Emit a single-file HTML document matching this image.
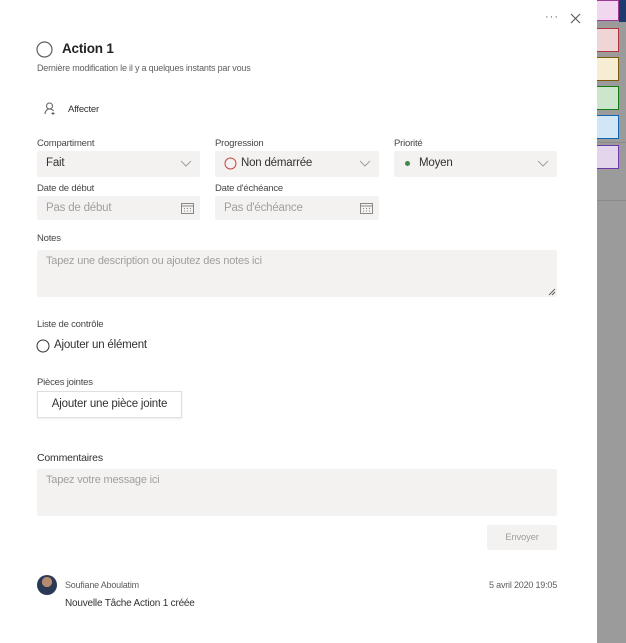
<!DOCTYPE html>
<html><head><meta charset="utf-8"><style>
*{margin:0;padding:0;box-sizing:border-box}
body{width:626px;height:643px;position:relative;overflow:hidden;background:#fff;font-family:"Segoe UI","Liberation Sans",sans-serif;color:#323130;letter-spacing:-0.2px}
.a{position:absolute;white-space:nowrap}
.lbl{font-size:9.5px;color:#484644}
.box{position:absolute;background:#f3f2f1;border-radius:2px}
.ph{color:#a19f9d;font-size:11px}
.chev{position:absolute;right:8px;top:9px}
.cal{position:absolute;right:6px;top:6px}
</style></head><body>
<div class="a" style="left:597px;top:0;width:29px;height:643px;background:#9b9b9b"></div>
<div class="a" style="left:619px;top:0;width:7px;height:22px;background:#1f3b6e"></div>
<div class="a" style="left:597px;top:142px;width:29px;height:1px;background:#8a8a8a"></div>
<div class="a" style="left:597px;top:200px;width:29px;height:1px;background:#8a8a8a"></div>
<div class="a" style="left:597px;top:0;width:22px;height:21px;background:#f2d7f0;border:1px solid #9b3a93;border-left:none"></div>
<div class="a" style="left:597px;top:28px;width:22px;height:24px;background:#f0d5d7;border:1px solid #b4313f;border-left:none"></div>
<div class="a" style="left:597px;top:57px;width:22px;height:24px;background:#f6edd2;border:1px solid #7a5c0c;border-left:none"></div>
<div class="a" style="left:597px;top:86px;width:22px;height:24px;background:#cbe6cb;border:1px solid #167a16;border-left:none"></div>
<div class="a" style="left:597px;top:115px;width:22px;height:24px;background:#d1e6f6;border:1px solid #1466b0;border-left:none"></div>
<div class="a" style="left:597px;top:145px;width:22px;height:24px;background:#e2d5ec;border:1px solid #6b3aa8;border-left:none"></div>

<div class="a" style="left:545px;top:11px;font-size:11px;color:#605e5c;letter-spacing:1px">···</div>
<svg class="a" style="left:570px;top:13px" width="11" height="11"><path d="M1 1L10 10M10 1L1 10" stroke="#605e5c" stroke-width="1.2"/></svg>

<svg class="a" style="left:36px;top:41px" width="17" height="17"><circle cx="8.5" cy="8.5" r="7.5" fill="none" stroke="#605e5c" stroke-width="1.2"/></svg>
<div class="a" style="left:62px;top:41px;font-size:13.5px;font-weight:600;color:#252423">Action 1</div>
<div class="a" style="left:37px;top:63px;font-size:9px;color:#605e5c">Dernière modification le il y a quelques instants par vous</div>

<svg class="a" style="left:44px;top:102px" width="13" height="13"><circle cx="5.5" cy="4" r="3" fill="none" stroke="#605e5c"/><path d="M1 12c0-3 2-5 4.5-5s3.5 1 4 2M9 10v3M7.5 11.5h3" fill="none" stroke="#605e5c"/></svg>
<div class="a" style="left:68px;top:104px;font-size:9.5px">Affecter</div>

<div class="a lbl" style="left:37px;top:138px">Compartiment</div>
<div class="a lbl" style="left:215px;top:138px">Progression</div>
<div class="a lbl" style="left:394px;top:138px">Priorité</div>
<div class="box" style="left:37px;top:151px;width:163px;height:26px"><span class="a" style="left:9px;top:6px;font-size:11.5px">Fait</span><svg class="chev" width="12" height="8"><path d="M1 1l5 5 5-5" fill="none" stroke="#a19f9d"/></svg></div>
<div class="box" style="left:215px;top:151px;width:164px;height:26px"><svg class="a" style="left:9px;top:6px" width="13" height="13"><circle cx="6.5" cy="6.5" r="5.5" fill="none" stroke="#c7473f"/></svg><span class="a" style="left:26px;top:6px;font-size:11.5px">Non démarrée</span><svg class="chev" width="12" height="8"><path d="M1 1l5 5 5-5" fill="none" stroke="#a19f9d"/></svg></div>
<div class="box" style="left:394px;top:151px;width:163px;height:26px"><span class="a" style="left:11px;top:10px;width:5px;height:5px;border-radius:50%;background:#3e8a4b"></span><span class="a" style="left:25px;top:6px;font-size:11.5px">Moyen</span><svg class="chev" width="12" height="8"><path d="M1 1l5 5 5-5" fill="none" stroke="#a19f9d"/></svg></div>

<div class="a lbl" style="left:37px;top:183px">Date de début</div>
<div class="a lbl" style="left:215px;top:183px">Date d'échéance</div>
<div class="box" style="left:37px;top:196px;width:163px;height:24px"><span class="a ph" style="left:9px;top:6px;font-size:11.5px">Pas de début</span><svg class="cal" width="13" height="12"><rect x="0.5" y="1.5" width="12" height="10" fill="none" stroke="#8a8886"/><path d="M0.5 4h12M3 6.5h1M6 6.5h1M9 6.5h1M3 9h1M6 9h1M9 9h1" stroke="#8a8886"/></svg></div>
<div class="box" style="left:215px;top:196px;width:164px;height:24px"><span class="a ph" style="left:9px;top:6px;font-size:11.5px">Pas d'échéance</span><svg class="cal" width="13" height="12"><rect x="0.5" y="1.5" width="12" height="10" fill="none" stroke="#8a8886"/><path d="M0.5 4h12M3 6.5h1M6 6.5h1M9 6.5h1M3 9h1M6 9h1M9 9h1" stroke="#8a8886"/></svg></div>

<div class="a lbl" style="left:37px;top:233px">Notes</div>
<div class="box" style="left:37px;top:250px;width:520px;height:47px"><span class="a ph" style="left:9px;top:5px">Tapez une description ou ajoutez des notes ici</span><svg class="a" style="right:1px;bottom:1px" width="8" height="8"><path d="M7 1L1 7M7 4L4 7" stroke="#605e5c"/></svg></div>

<div class="a lbl" style="left:37px;top:319px">Liste de contrôle</div>
<svg class="a" style="left:36px;top:339px" width="14" height="14"><circle cx="7" cy="7" r="6" fill="none" stroke="#323130"/></svg>
<div class="a" style="left:54px;top:339px;font-size:11.5px">Ajouter un élément</div>

<div class="a lbl" style="left:37px;top:377px">Pièces jointes</div>
<div class="a" style="left:37px;top:391px;width:145px;height:27px;border:1px solid #e1dfdd;box-shadow:0 1px 2px rgba(0,0,0,.08);font-size:11.5px;text-align:center;line-height:25px">Ajouter une pièce jointe</div>

<div class="a" style="left:37px;top:452px;font-size:10.5px">Commentaires</div>
<div class="box" style="left:37px;top:469px;width:520px;height:47px"><span class="a ph" style="left:9px;top:5px">Tapez votre message ici</span></div>
<div class="box" style="left:487px;top:525px;width:70px;height:25px;text-align:center;line-height:25px;font-size:9.5px;color:#a19f9d">Envoyer</div>

<div class="a" style="left:37px;top:575px;width:20px;height:20px;border-radius:50%;background:radial-gradient(circle at 50% 35%,#b58a6e 0 30%,#2a3a55 32%)"></div>
<div class="a" style="left:65px;top:580px;font-size:9px;color:#605e5c">Soufiane Aboulatim</div>
<div class="a" style="right:69px;top:580px;font-size:9px;color:#605e5c">5 avril 2020 19:05</div>
<div class="a" style="left:65px;top:598px;font-size:10px">Nouvelle Tâche Action 1 créée</div>
</body></html>
